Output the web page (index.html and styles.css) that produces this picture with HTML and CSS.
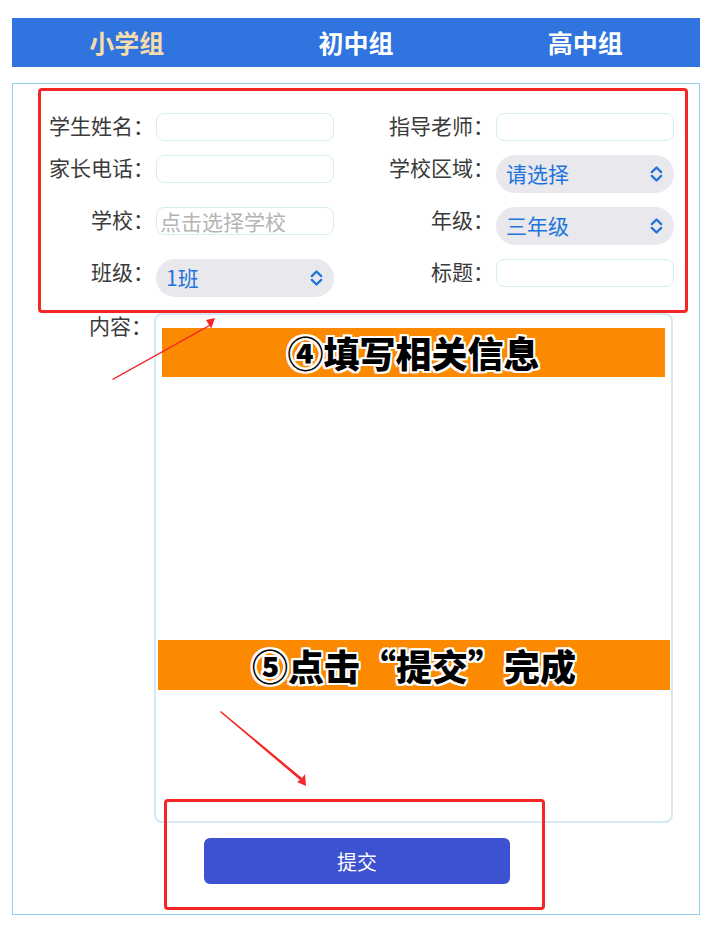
FILE: index.html
```html
<!DOCTYPE html>
<html lang="zh-CN">
<head>
  <meta charset="UTF-8">
  <meta name="viewport" content="width=device-width, initial-scale=1.0">
  <title>作品提交</title>
  <link rel="stylesheet" href="styles.css">
</head>
<body>
  <div class="page">
    <!-- 分组标签 -->
    <div class="tabs">
      <div class="tab active">小学组</div>
      <div class="tab">初中组</div>
      <div class="tab">高中组</div>
    </div>

    <div class="panel">
      <div class="form">
        <div class="label">学生姓名：</div>
        <div class="input"></div>
        <div class="label">指导老师：</div>
        <div class="input"></div>

        <div class="label">家长电话：</div>
        <div class="input"></div>
        <div class="label">学校区域：</div>
        <div class="select">请选择
          <svg class="chev" viewBox="0 0 16 20"><path d="M3 8 L8 3 L13 8 M3 12 L8 17 L13 12"/></svg>
        </div>

        <div class="label">学校：</div>
        <div class="input placeholder">点击选择学校</div>
        <div class="label">年级：</div>
        <div class="select">三年级
          <svg class="chev" viewBox="0 0 16 20"><path d="M3 8 L8 3 L13 8 M3 12 L8 17 L13 12"/></svg>
        </div>

        <div class="label">班级：</div>
        <div class="select">1班
          <svg class="chev" viewBox="0 0 16 20"><path d="M3 8 L8 3 L13 8 M3 12 L8 17 L13 12"/></svg>
        </div>
        <div class="label">标题：</div>
        <div class="input"></div>
      </div>

      <div class="content-row">
        <div class="label">内容：</div>
        <div class="textarea"></div>
      </div>

      <button class="submit">提交</button>

      <!-- 教程标注 -->
      <div class="mark mark-form"></div>
      <div class="mark mark-btn"></div>
      <div class="banner banner-1">④填写相关信息</div>
      <div class="banner banner-2">⑤点击“提交”完成</div>
      <svg class="arrows" viewBox="0 0 686 832">
        <polygon points="99,295 196,241 193,236 202,234 198,245 197,242 100,296" />
        <polygon points="207,628 208,627 289,694 292,690 293,702 284,698 287,696" />
      </svg>
    </div>
  </div>
</body>
</html>
```

FILE: styles.css
```css
body {
  margin: 0;
  background: #fff;
  font-family: "Noto Sans CJK SC", "Noto Sans", sans-serif;
  color: #3a3a3a;
}

.page {
  padding: 18px 17px 12px 12px;
}

.tabs {
  display: flex;
  height: 49px;
  background: #2f74df;
}

.tab {
  flex: 1;
  text-align: center;
  line-height: 49px;
  font-size: 25px;
  font-weight: bold;
  color: #fff;
}

.tab.active {
  color: #f6dcaa;
}

.panel {
  position: relative;
  margin-top: 16px;
  height: 832px;
  border: 1px solid #8fd0ee;
  box-sizing: border-box;
  padding-top: 29px;
}

.form {
  display: grid;
  grid-template-columns: 143px 178px 162px 178px;
  row-gap: 14px;
  align-items: start;
}

.label {
  font-size: 21px;
  line-height: 25px;
  text-align: right;
  padding-right: 2px;
  white-space: nowrap;
}

.input {
  height: 28px;
  box-sizing: border-box;
  border: 1px solid #d5eef0;
  border-radius: 8px;
  font-size: 21px;
  line-height: 26px;
  padding-left: 3px;
}

.placeholder {
  color: #b4b4b4;
}

.select {
  position: relative;
  height: 38px;
  border-radius: 19px;
  background: #e8e8ed;
  color: #1f74dc;
  font-size: 21px;
  line-height: 37px;
  padding-left: 10px;
}

.chev {
  position: absolute;
  right: 10px;
  top: 9px;
  width: 15px;
  height: 20px;
  fill: none;
  stroke: #1f74dc;
  stroke-width: 2.4;
  stroke-linecap: round;
  stroke-linejoin: round;
}

.content-row {
  display: grid;
  grid-template-columns: 141px 519px;
  margin-top: 16px;
}

.textarea {
  height: 510px;
  box-sizing: border-box;
  border: 2px solid #d3eaf5;
  border-radius: 8px;
}

.submit {
  display: block;
  margin: 15px 0 0 191px;
  width: 306px;
  height: 46px;
  border: none;
  border-radius: 6px;
  background: #3d52d0;
  color: #fff;
  font-family: inherit;
  font-size: 20px;
}

.mark {
  position: absolute;
  border: 3px solid #f52626;
  border-radius: 4px;
  box-sizing: border-box;
}

.mark-form {
  left: 25px;
  top: 4px;
  width: 650px;
  height: 225px;
}

.mark-btn {
  left: 151px;
  top: 715px;
  width: 381px;
  height: 111px;
}

.banner {
  position: absolute;
  background: #fb8a00;
  color: #000;
  text-align: center;
  font-size: 36px;
  font-weight: 900;
  text-shadow: 2px 0 #fff, -2px 0 #fff, 0 2px #fff, 0 -2px #fff,
    2px 2px #fff, -2px -2px #fff, 2px -2px #fff, -2px 2px #fff;
}

.banner-1 {
  left: 149px;
  top: 244px;
  width: 503px;
  height: 49px;
  line-height: 49px;
}

.banner-2 {
  left: 145px;
  top: 556px;
  width: 512px;
  height: 50px;
  line-height: 50px;
}

.arrows {
  position: absolute;
  left: 0;
  top: 0;
  width: 686px;
  height: 832px;
  fill: #f52626;
  pointer-events: none;
}
```
